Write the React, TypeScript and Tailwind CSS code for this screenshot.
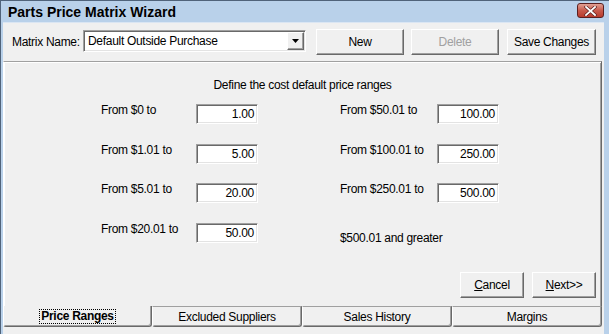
import React from "react";

const narrow = "font-['Liberation_Sans',Arial,sans-serif] tracking-[-0.3px]";

function Btn({ children, disabled, className = "" }: { children: React.ReactNode; disabled?: boolean; className?: string }) {
  return (
    <div
      className={`flex h-[26px] items-center justify-center whitespace-nowrap border border-t-white border-l-white border-r-[#696969] border-b-[#696969] bg-[#f0f0f0] text-[12px] leading-[14px] shadow-[inset_-1px_-1px_0_#a0a0a0] ${
        disabled ? "text-[#a0a0a0]" : "text-black"
      } ${className}`}
    >
      {children}
    </div>
  );
}

function Box({ value }: { value: string }) {
  return (
    <div className="flex h-[20px] w-[62px] items-center justify-end border border-t-[#a0a0a0] border-l-[#a0a0a0] border-r-white border-b-white bg-white pr-[3px] text-[12px] leading-[14px] shadow-[inset_1px_1px_0_#696969,inset_-1px_-1px_0_#e3e3e3]">
      {value}
    </div>
  );
}

function Row({ left, lv, right, rv, last }: { left: string; lv: string; right: string; rv?: string; last?: boolean }) {
  return (
    <div className="flex h-[20px] items-start whitespace-nowrap">
      <div className="mt-[-1px] box-content w-[95px] pl-[97px]">{left}</div>
      <Box value={lv} />
      <div className={`ml-[82px] w-[97px] ${last ? "mt-[8px] w-[200px]" : "mt-[-1px]"}`}>{right}</div>
      {rv && <Box value={rv} />}
    </div>
  );
}

function Tab({ label }: { label: string }) {
  return (
    <div className="flex h-[21px] w-[150px] items-center justify-center rounded-b-[3px] border border-t-[#a0a0a0] border-l-white border-r-[#696969] border-b-[#696969] text-[12px] leading-[14px] shadow-[inset_-1px_-1px_0_#a0a0a0]">
      {label}
    </div>
  );
}

export default function App() {
  return (
    <div className={`flex h-[334px] w-[609px] flex-col overflow-hidden border-l border-t border-[#50637a] bg-[#b9d1ea] text-black ${narrow}`}>
      <div className="flex h-[21px] shrink-0 items-center justify-between pl-[7px] pr-[5px]">
        <span className="text-[14px] font-bold leading-[16px] tracking-normal">Parts Price Matrix Wizard</span>
        <div className="mt-[-2px] flex h-[15px] w-[27px] items-center justify-center rounded-[3px] border border-[#5b2020] bg-gradient-to-b from-[#e0a094] via-[#c85a4c] to-[#b83a2c]">
          <svg width="13" height="10" viewBox="0 0 13 10">
            <path d="M2 1 L11 9 M11 1 L2 9" stroke="#5a1f1f" strokeWidth="3.2" strokeLinecap="square" />
            <path d="M2 1 L11 9 M11 1 L2 9" stroke="#ffffff" strokeWidth="1.8" strokeLinecap="square" />
          </svg>
        </div>
      </div>
      <div className="ml-[2px] mr-[5px] flex flex-1 flex-col border-t border-[#dbe6f3] bg-[#f0f0f0]">
        <div className="flex h-[38px] shrink-0 items-start">
          <div className="ml-[9px] mt-[12px] w-[71px] whitespace-nowrap text-[12px] leading-[14px]">Matrix Name:</div>
          <div className="mt-[7px] flex h-[22px] w-[223px] items-center border border-t-[#a0a0a0] border-l-[#a0a0a0] border-r-white border-b-white bg-white shadow-[inset_1px_1px_0_#696969,inset_-1px_-1px_0_#e3e3e3]">
            <span className="flex-1 pl-[4px] text-[12px] leading-[14px]">Default Outside Purchase</span>
            <div className="mr-[1px] flex h-[18px] w-[17px] items-center justify-center border border-t-white border-l-white border-r-[#696969] border-b-[#696969] bg-[#f0f0f0] shadow-[inset_-1px_-1px_0_#a0a0a0]">
              <svg width="7" height="4" viewBox="0 0 7 4">
                <path d="M0 0 H7 L3.5 4 Z" fill="#000" />
              </svg>
            </div>
          </div>
          <Btn className="ml-[10px] mt-[6px] w-[88px]">New</Btn>
          <Btn disabled className="ml-[7px] mt-[6px] w-[88px]">Delete</Btn>
          <Btn className="ml-[8px] mt-[6px] w-[89px]">Save Changes</Btn>
        </div>
        <div className="mr-[2px] flex flex-1 flex-col">
          <div className="flex h-[245px] flex-col border-l border-t border-r border-t-[#a0a0a0] border-l-white border-r-[#696969] text-[12px] leading-[14px] shadow-[inset_1px_1px_0_#ffffff,inset_-1px_0_0_#a0a0a0]">
            <div className="mt-[16px] text-center">Define the cost default price ranges</div>
            <div className="mt-[12px] flex flex-col gap-[19.5px]">
              <Row left="From $0 to" lv="1.00" right="From $50.01 to" rv="100.00" />
              <Row left="From $1.01 to" lv="5.00" right="From $100.01 to" rv="250.00" />
              <Row left="From $5.01 to" lv="20.00" right="From $250.01 to" rv="500.00" />
              <Row left="From $20.01 to" lv="50.00" right="$500.01 and greater" last />
            </div>
            <div className="mt-[29px] flex justify-end gap-[8px] pr-[5px]">
              <Btn className="w-[64px]">
                <span><span className="underline">C</span>ancel</span>
              </Btn>
              <Btn className="w-[64px]">
                <span><span className="underline">N</span>ext&gt;&gt;</span>
              </Btn>
            </div>
          </div>
          <div className="flex">
            <div className="flex h-[21px] w-[149px] items-center justify-center rounded-bl-[3px] rounded-br-[3px] border-l border-b border-r border-l-white border-b-[#696969] border-r-[#696969] text-[12px] leading-[14px] shadow-[inset_-1px_-1px_0_#a0a0a0]">
              <span className="border border-dotted border-black px-[1px] font-bold leading-[13px]">Price Ranges</span>
            </div>
            <Tab label="Excluded Suppliers" />
            <Tab label="Sales History" />
            <Tab label="Margins" />
          </div>
        </div>
      </div>
    </div>
  );
}
